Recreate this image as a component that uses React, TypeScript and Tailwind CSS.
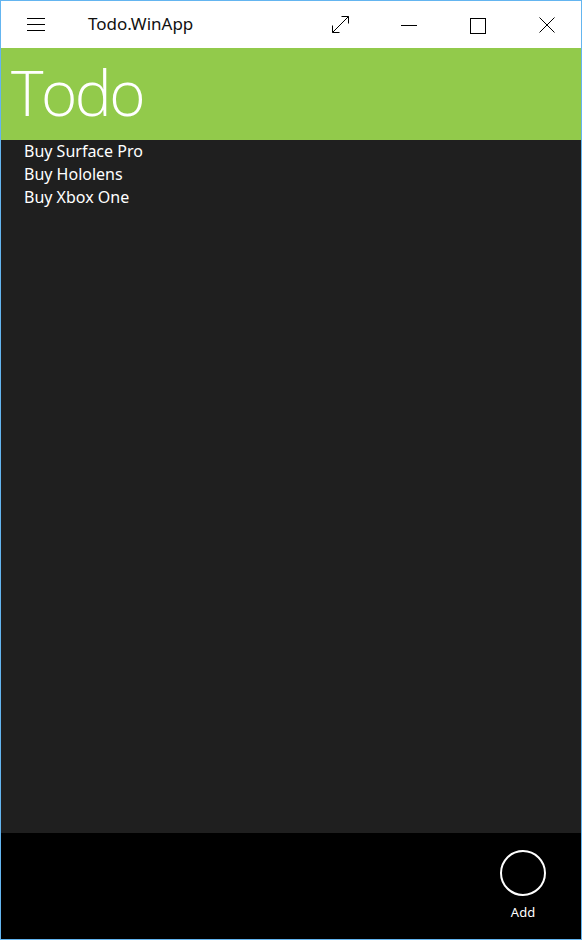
import React from "react";

export default function App() {
  const items = ["Buy Surface Pro", "Buy Hololens", "Buy Xbox One"];
  return (
    <div className="w-[582px] h-[940px] border border-[#64b5f0] flex flex-col overflow-hidden" style={{ fontFamily: '"Noto Sans", "Open Sans", sans-serif' }}>
      <div className="h-[47px] bg-white flex items-center relative shrink-0">
        <svg className="absolute left-[25px] top-[16px]" width="20" height="16" viewBox="0 0 20 16">
          <path d="M1 1.5H19M1 7.5H19M1 13.5H19" stroke="#000" strokeWidth="1" />
        </svg>
        <div className="absolute left-[87px] top-[13px] text-[17px] leading-[20px] text-[#111]">Todo.WinApp</div>
        <svg className="absolute left-[329px] top-[13px]" width="21" height="21" viewBox="0 0 21 21">
          <path d="M2.5 18.5L18.5 2.5M11.5 2.5H18.5V9.5M2.5 11.5V18.5H9.5" stroke="#000" strokeWidth="1" fill="none" />
        </svg>
        <svg className="absolute left-[399px] top-[20px]" width="18" height="8" viewBox="0 0 18 8">
          <path d="M1 4.5H17" stroke="#000" strokeWidth="1" />
        </svg>
        <svg className="absolute left-[468px] top-[16px]" width="18" height="18" viewBox="0 0 18 18">
          <rect x="1.5" y="1.5" width="15" height="15" stroke="#000" strokeWidth="1" fill="none" />
        </svg>
        <svg className="absolute left-[537px] top-[15px]" width="18" height="18" viewBox="0 0 18 18">
          <path d="M1.5 1.5L16.5 16.5M16.5 1.5L1.5 16.5" stroke="#000" strokeWidth="1" />
        </svg>
      </div>
      <div className="h-[92px] bg-[#92ca4b] shrink-0 flex items-center">
        <div className="pl-[10px] text-white text-[62px] leading-none font-light tracking-[-2.5px] -mt-[4px]" style={{ fontFamily: '"Open Sans", "Noto Sans", sans-serif' }}>Todo</div>
      </div>
      <div className="flex-1 bg-[#1f1f1f] pl-[23px]">
        {items.map((t) => (
          <div key={t} className="text-white text-[16px] leading-[23px]">{t}</div>
        ))}
      </div>
      <div className="h-[106px] bg-black shrink-0 flex justify-end pr-[28px] pt-[17px]">
        <div className="flex flex-col items-center w-[60px]">
          <div className="w-[46px] h-[46px] rounded-full border-2 border-white" />
          <div className="text-white text-[13px] leading-[16px] mt-[8px]">Add</div>
        </div>
      </div>
    </div>
  );
}
